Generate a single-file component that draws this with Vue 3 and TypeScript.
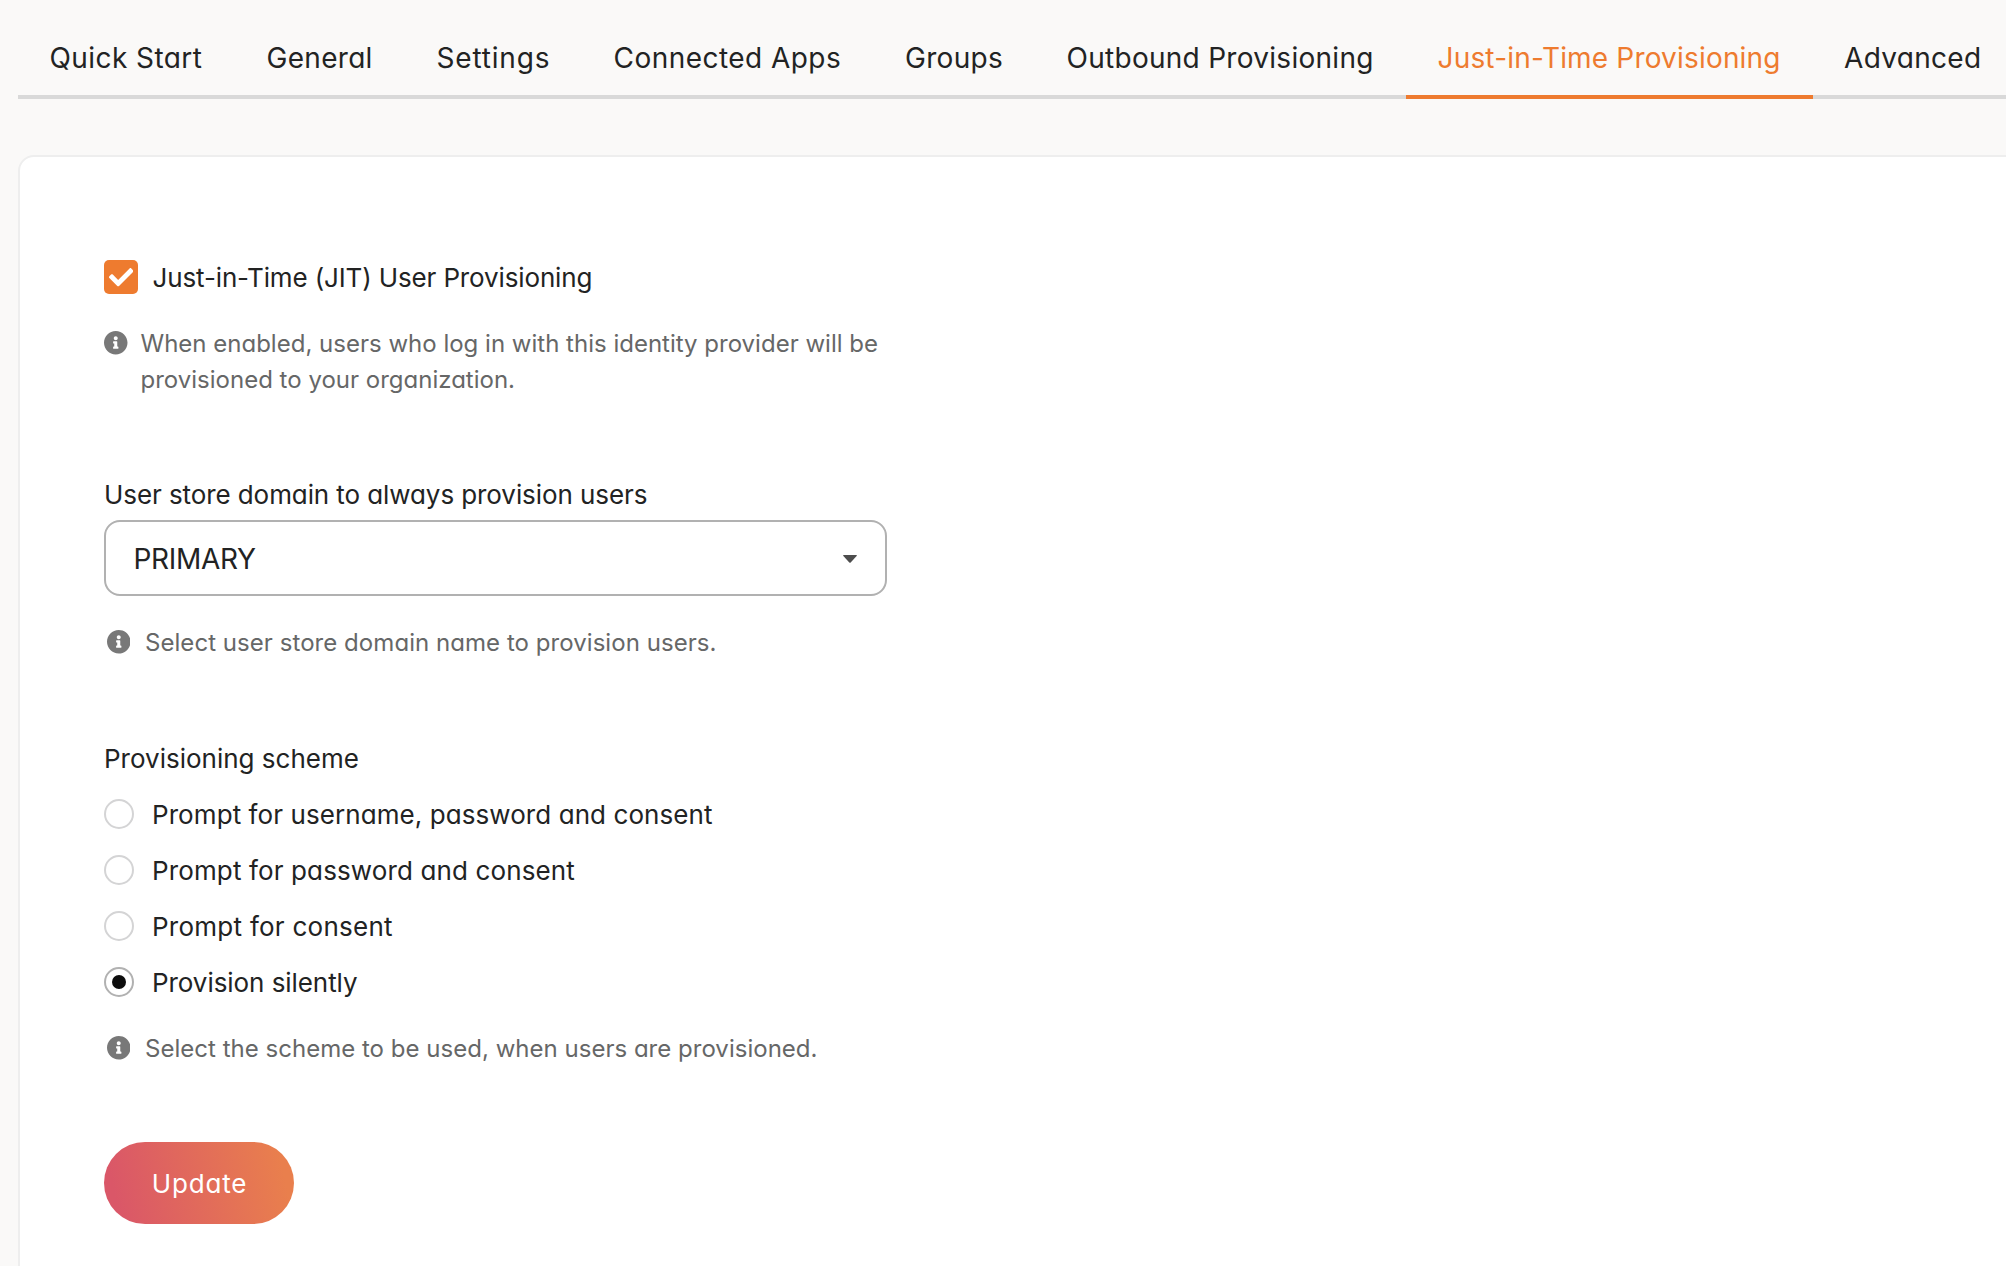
<script setup lang="ts">
import { ref } from 'vue'

interface Tab { label: string; width: number; spacing: number }
interface Scheme { label: string; spacing: number }

const tabs: Tab[] = [
  { label: 'Quick Start', width: 217, spacing: 0.42 },
  { label: 'General', width: 170, spacing: 0.3 },
  { label: 'Settings', width: 177, spacing: 0.82 },
  { label: 'Connected Apps', width: 291.5, spacing: 0.46 },
  { label: 'Groups', width: 161.5, spacing: 0.3 },
  { label: 'Outbound Provisioning', width: 371, spacing: 0.28 },
  { label: 'Just-in-Time Provisioning', width: 406.5, spacing: 0.18 },
  { label: 'Advanced', width: 201, spacing: 0.313 },
]
const activeTab = ref('Just-in-Time Provisioning')

const schemes: Scheme[] = [
  { label: 'Prompt for username, password and consent', spacing: 0.077 },
  { label: 'Prompt for password and consent', spacing: 0.13 },
  { label: 'Prompt for consent', spacing: 0.26 },
  { label: 'Provision silently', spacing: -0.06 },
]
const selectedScheme = ref('Provision silently')
const jitEnabled = ref(true)

const infoPath =
  'M256 8C119.043 8 8 119.083 8 256c0 136.997 111.043 248 248 248s248-111.003 248-248C504 119.083 392.957 8 256 8zm0 110c23.196 0 42 18.804 42 42s-18.804 42-42 42-42-18.804-42-42 18.804-42 42-42zm56 254c0 6.627-5.373 12-12 12h-88c-6.627 0-12-5.373-12-12v-24c0-6.627 5.373-12 12-12h12v-64h-12c-6.627 0-12-5.373-12-12v-24c0-6.627 5.373-12 12-12h64c6.627 0 12 5.373 12 12v100h12c6.627 0 12 5.373 12 12v24z'
</script>

<template>
  <div class="page">
    <nav class="tabs">
      <a
        v-for="tab in tabs"
        :key="tab.label"
        class="tab"
        :class="{ active: tab.label === activeTab }"
        :style="{ width: tab.width + 'px', letterSpacing: tab.spacing + 'px' }"
        @click="activeTab = tab.label"
      >{{ tab.label }}</a>
    </nav>

    <main class="card">
      <div class="check-row" @click="jitEnabled = !jitEnabled">
        <span class="checkbox">
          <svg v-if="jitEnabled" viewBox="0 0 512 512" fill="#fff">
            <path d="M173.898 439.404l-166.4-166.4c-9.997-9.997-9.997-26.206 0-36.204l36.203-36.204c9.997-9.998 26.207-9.998 36.204 0L192 312.69 432.095 72.596c9.997-9.997 26.207-9.997 36.204 0l36.203 36.204c9.997 9.997 9.997 26.206 0 36.204l-294.4 294.401c-9.998 9.997-26.207 9.997-36.204-.001z" />
          </svg>
        </span>
        <span class="check-label">Just-in-Time (JIT) User Provisioning</span>
      </div>
      <div class="hint hint-toggle">
        <svg class="info" viewBox="8 8 496 496"><path :d="infoPath" /></svg>
        <p>When enabled, users who log in with this identity provider will be<br />provisioned to your organization.</p>
      </div>

      <div class="label label-store">User store domain to always provision users</div>
      <div class="select">
        <span>PRIMARY</span>
        <svg class="caret" viewBox="0 0 14 8"><path d="M0.7 0h12.6q1 .1.3 1L7.7 7.5q-.7.7-1.4 0L.4 1Q-.3.1.7 0z" /></svg>
      </div>
      <div class="hint hint-store">
        <svg class="info" viewBox="8 8 496 496"><path :d="infoPath" /></svg>
        <p>Select user store domain name to provision users.</p>
      </div>

      <div class="label label-scheme">Provisioning scheme</div>
      <div class="radios">
        <div
          v-for="scheme in schemes"
          :key="scheme.label"
          class="radio-row"
          @click="selectedScheme = scheme.label"
        >
          <span class="radio" :class="{ checked: scheme.label === selectedScheme }"></span>
          <span class="radio-label" :style="{ letterSpacing: scheme.spacing + 'px' }">{{ scheme.label }}</span>
        </div>
      </div>
      <div class="hint hint-scheme">
        <svg class="info" viewBox="8 8 496 496"><path :d="infoPath" /></svg>
        <p>Select the scheme to be used, when users are provisioned.</p>
      </div>

      <button class="update" type="button">Update</button>
    </main>
  </div>
</template>

<style>
body {
  margin: 0;
  background: #faf9f8;
}
</style>

<style scoped>
.page {
  box-sizing: border-box;
  width: 100%;
  height: 1266px;
  overflow: hidden;
  padding-left: 18px;
  background: #faf9f8;
  color: #222323;
  font-family: Inter, "Open Sans", sans-serif;
  font-feature-settings: 'cv11';
  font-size: 26px;
}
.tabs {
  display: flex;
  width: 1995.5px;
}
.tab {
  box-sizing: border-box;
  flex: none;
  height: 99px;
  padding: 22px 0 0 31.5px;
  border-bottom: 4px solid #d9d9d9;
  font-size: 28px;
  line-height: 73px;
  white-space: nowrap;
}
.tab.active {
  color: #ee7b2f;
  border-color: #ee7b2f;
}
.card {
  box-sizing: border-box;
  width: 2020px;
  height: 1200px;
  margin-top: 56px;
  padding: 103px 0 0 84px;
  border: 2px solid #eeeeee;
  border-radius: 16px;
  background: #fff;
}
.check-row {
  display: flex;
  align-items: center;
  gap: 14.5px;
  height: 34px;
}
.checkbox {
  display: flex;
  align-items: center;
  justify-content: center;
  width: 34px;
  height: 34px;
  border-radius: 5px;
  background: #ee7b2f;
}
.checkbox svg {
  width: 24.4px;
  height: 24.4px;
}
.check-label {
  padding-top: 2px;
  line-height: 34px;
  letter-spacing: -0.135px;
}
.hint {
  display: flex;
  height: 36px;
  color: #666767;
  font-size: 24px;
  line-height: 36px;
  letter-spacing: 0.02px;
}
.hint p {
  margin: 0;
  padding-top: 1px;
}
.info {
  flex: none;
  width: 23.5px;
  height: 23.5px;
  margin-top: 6px;
  fill: #787878;
}
.hint-toggle {
  gap: 13px;
  height: 72px;
  margin-top: 31px;
  letter-spacing: 0.005px;
}
.hint-store,
.hint-scheme {
  gap: 15px;
  padding-left: 2.5px;
}
.hint-store {
  margin-top: 28px;
  letter-spacing: 0.051px;
}
.hint-scheme {
  margin-top: 33px;
}
.label {
  height: 34px;
  line-height: 34px;
}
.label-store {
  margin-top: 81px;
  margin-bottom: 8px;
  letter-spacing: -0.085px;
}
.label-scheme {
  margin-top: 82px;
}
.select {
  box-sizing: border-box;
  display: flex;
  align-items: center;
  justify-content: space-between;
  width: 783px;
  height: 76px;
  padding: 2px 28px 0 27.5px;
  border: 2px solid #b1b1b1;
  border-radius: 16px;
  font-size: 28px;
  letter-spacing: -0.3px;
}
.caret {
  width: 14px;
  height: 8px;
  fill: #4d4d4d;
}
.radios {
  display: flex;
  flex-direction: column;
  gap: 26px;
  margin-top: 23px;
}
.radio-row {
  display: flex;
  align-items: center;
  gap: 18px;
  height: 30px;
}
.radio-label {
  padding-top: 1px;
  line-height: 30px;
}
.radio {
  box-sizing: border-box;
  display: flex;
  align-items: center;
  justify-content: center;
  width: 30px;
  height: 30px;
  border: 2px solid #d4d4d5;
  border-radius: 50%;
}
.radio.checked {
  border-color: #b1b1b1;
}
.radio.checked::before {
  content: '';
  width: 14px;
  height: 14px;
  border-radius: 50%;
  background: #0d0d0d;
}
.update {
  display: block;
  width: 190px;
  height: 82px;
  margin: 76px 0 0;
  padding: 1px 0 0 1px;
  border: 0;
  border-radius: 41px;
  background: linear-gradient(78deg, #da5768 8%, #e97f4d 92%);
  color: #fff;
  font: inherit;
  font-feature-settings: inherit;
  letter-spacing: 0.8px;
}
</style>
